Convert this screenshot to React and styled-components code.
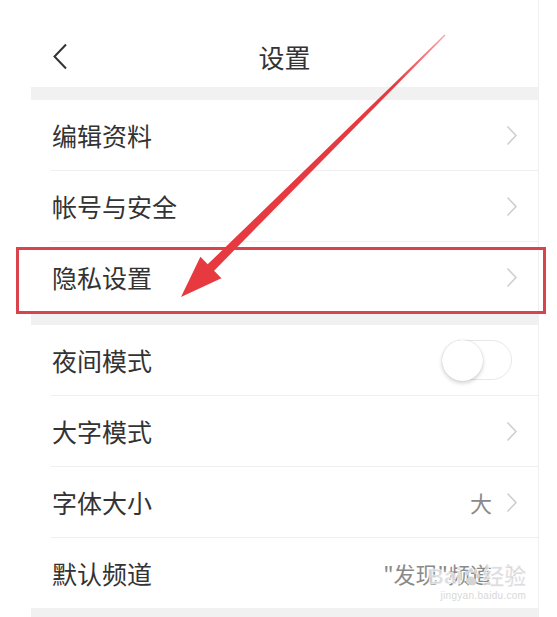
import React from 'react'
import styled, { createGlobalStyle } from 'styled-components'

const GlobalStyle = createGlobalStyle`
  html, body {
    margin: 0;
    padding: 0;
    background: #fff;
  }
  body {
    font-family: "Noto Sans CJK SC", "Noto Sans", sans-serif;
  }
`

const rows = [
  [
    { label: '编辑资料' },
    { label: '帐号与安全' },
    { label: '隐私设置' },
  ],
  [
    { label: '夜间模式', toggle: true },
    { label: '大字模式' },
    { label: '字体大小', value: '大' },
    { label: '默认频道', value: '"发现"频道' },
  ],
]

function Chevron() {
  return (
    <svg width="12" height="21" viewBox="0 0 12 21">
      <path d="M1.5 1.5 L10 10.5 L1.5 19.5" fill="none" stroke="#cfcfcf" strokeWidth="1.6" />
    </svg>
  )
}

function BackIcon() {
  return (
    <svg width="16" height="27" viewBox="0 0 16 27">
      <path d="M14 1.5 L2.5 13.5 L14 25.5" fill="none" stroke="#333" strokeWidth="2" />
    </svg>
  )
}

export default function App() {
  return (
    <Page>
      <GlobalStyle />
      <Column>
        <Header>
          <BackButton><BackIcon /></BackButton>
          <Title>设置</Title>
          <BackButton />
        </Header>
        {rows.map((group, gi) => (
          <React.Fragment key={gi}>
            <Band />
            <Group>
              {group.map((item, i) => (
                <Row key={item.label} last={i === group.length - 1}>
                  <Label>{item.label}</Label>
                  {item.toggle ? (
                    <Toggle><Knob /></Toggle>
                  ) : (
                    <Right>
                      {item.value && <Value>{item.value}</Value>}
                      <Chevron />
                    </Right>
                  )}
                </Row>
              ))}
            </Group>
          </React.Fragment>
        ))}
        <Band />
      </Column>

      <Highlight />
      <Arrow viewBox="0 0 557 617" width="557" height="617">
        <defs>
          <linearGradient id="fade" x1="445" y1="35" x2="395" y2="85" gradientUnits="userSpaceOnUse">
            <stop offset="0" stopColor="#f2a3a8" />
            <stop offset="1" stopColor="#e63a40" />
          </linearGradient>
        </defs>
        <polygon
          points="444.6,34.6 445.4,35.4 214.1,270.7 221.4,278.2 181,297 200.4,256.8 207.7,264.3"
          fill="url(#fade)"
        />
      </Arrow>

      <Watermark>
        <Brand>
          Bai
          <svg width="20" height="20" viewBox="0 0 20 20">
            <g fill="#d4d4d4">
              <ellipse cx="5" cy="6" rx="2" ry="2.6" />
              <ellipse cx="9" cy="3.5" rx="2" ry="2.6" />
              <ellipse cx="13.5" cy="4.5" rx="2" ry="2.6" />
              <ellipse cx="16" cy="9" rx="2" ry="2.4" />
              <path d="M4 15 C4 10 9 8.5 11 10 C14 12 15.5 14 14 17 C12 19 6 19 4 15 Z" />
            </g>
          </svg>
          经验
        </Brand>
        <Url>jingyan.baidu.com</Url>
      </Watermark>
    </Page>
  )
}

const Page = styled.div`
  position: relative;
  width: 557px;
  height: 617px;
  overflow: hidden;
  background: #fff;
`

const Column = styled.div`
  margin-left: 31px;
  width: 507px;
  border-right: 1px solid #f0f0f0;
`

const Header = styled.div`
  display: flex;
  align-items: center;
  height: 87px;
  padding: 26px 21px 0;
  box-sizing: border-box;
`

const BackButton = styled.div`
  width: 40px;
  display: flex;
  align-items: center;
`

const Title = styled.div`
  flex: 1;
  text-align: center;
  font-size: 26px;
  color: #333;
  line-height: 1;
`

const Band = styled.div`
  height: 13px;
  background: #f1f1f1;
`

const Group = styled.div`
  background: #fff;
`

const Row = styled.div`
  display: flex;
  align-items: center;
  justify-content: space-between;
  height: 70px;
  margin-left: 20px;
  padding-right: 20px;
  border-bottom: ${p => (p.last ? 'none' : '1px solid #efefef')};
`

const Label = styled.span`
  font-size: 25px;
  color: #333;
  padding-left: 1px;
`

const Right = styled.div`
  display: flex;
  align-items: center;
  gap: 14px;
`

const Value = styled.span`
  font-size: 22px;
  color: #8a8a8a;
`

const Toggle = styled.div`
  position: relative;
  width: 70px;
  height: 40px;
  margin-right: 6px;
  border: 1px solid #e8e8e8;
  border-radius: 21px;
  background: #fff;
  box-sizing: border-box;
`

const Knob = styled.div`
  position: absolute;
  left: -1px;
  top: -1px;
  width: 41px;
  height: 41px;
  border-radius: 50%;
  background: #fff;
  box-shadow: 0 2px 4px rgba(0, 0, 0, 0.18), 0 0 1px rgba(0, 0, 0, 0.2);
`

const Highlight = styled.div`
  position: absolute;
  left: 16px;
  top: 247px;
  width: 530px;
  height: 67px;
  border: 3px solid #d9434b;
  box-sizing: border-box;
  pointer-events: none;
`

const Arrow = styled.svg`
  position: absolute;
  left: 0;
  top: 0;
  pointer-events: none;
`

const Watermark = styled.div`
  position: absolute;
  left: 428px;
  top: 566px;
  display: flex;
  flex-direction: column;
  align-items: flex-end;
  pointer-events: none;
  font-family: "Liberation Sans", "Noto Sans CJK SC", sans-serif;
`

const Brand = styled.div`
  display: flex;
  align-items: center;
  font-size: 22px;
  font-weight: bold;
  color: rgba(215, 215, 215, 0.85);
  -webkit-text-stroke: 0.5px #fff;
  line-height: 1;
`

const Url = styled.div`
  margin-top: 2px;
  font-size: 10px;
  color: #d8d8d8;
  letter-spacing: 0.3px;
`
